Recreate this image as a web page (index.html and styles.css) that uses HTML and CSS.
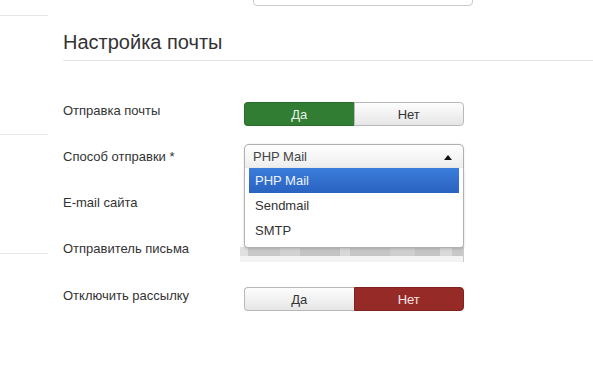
FILE: index.html
```html
<!DOCTYPE html>
<html lang="ru">
<head>
<meta charset="utf-8">
<link rel="stylesheet" href="styles.css">
</head>
<body>
<div class="page">
  <aside class="sidebar">
    <div class="side-item first"></div>
    <div class="side-item"></div>
    <div class="side-item"></div>
  </aside>
  <main class="main">
    <div class="top-input"></div>
    <h2 class="section-title">Настройка почты</h2>
    <div class="form">
      <div class="row">
        <label class="label">Отправка почты</label>
        <div class="toggle">
          <span class="btn yes active">Да</span>
          <span class="btn no">Нет</span>
        </div>
      </div>
      <div class="row">
        <label class="label">Способ отправки *</label>
        <div class="select-wrap">
          <div class="select">
            <span>PHP Mail</span>
            <span class="caret"></span>
          </div>
          <ul class="options">
            <li class="option selected">PHP Mail</li>
            <li class="option">Sendmail</li>
            <li class="option">SMTP</li>
          </ul>
        </div>
      </div>
      <div class="row">
        <label class="label">E-mail сайта</label>
      </div>
      <div class="row">
        <label class="label">Отправитель письма</label>
        <div class="blurred">
          <div class="blur-top"></div>
          <div class="blur-bottom"></div>
        </div>
      </div>
      <div class="row last">
        <label class="label">Отключить рассылку</label>
        <div class="toggle">
          <span class="btn yes">Да</span>
          <span class="btn no active-no">Нет</span>
        </div>
      </div>
    </div>
  </main>
</div>
</body>
</html>
```
FILE: styles.css
```css
* { box-sizing: border-box; }
html, body { margin: 0; padding: 0; background: #fff; }
body {
  font-family: "Helvetica Neue", "Liberation Sans", Arial, sans-serif;
  color: #333;
  width: 593px;
  height: 366px;
  overflow: hidden;
}
.page { display: flex; }
.sidebar { width: 48px; flex: none; }
.side-item {
  height: 119px;
  border-bottom: 1px solid #e6e6e6;
}
.side-item.first { height: 16px; }
.main {
  flex: 1;
  padding-left: 15px;
}
.top-input {
  width: 220px;
  height: 30px;
  margin-top: -24px;
  margin-left: 190px;
  border: 1px solid #ccc;
  border-radius: 4px;
}
.section-title {
  margin: 0;
  margin-top: 23px;
  font-weight: normal;
  font-size: 20px;
  line-height: 26px;
  color: #333;
  padding-bottom: 5px;
  border-bottom: 1px solid #e3e3e3;
}
.form { margin-top: 41px; }
.row {
  display: flex;
  align-items: flex-start;
  height: 46px;
}
.row.last { padding-top: 1px; }
.label {
  width: 181px;
  flex: none;
  font-size: 13px;
  line-height: 18px;
  color: #333;
}
.toggle {
  display: flex;
  width: 220px;
  height: 24px;
}
.btn {
  flex: 1;
  display: flex;
  align-items: center;
  justify-content: center;
  font-size: 13px;
  color: #333;
  background: linear-gradient(#fdfdfd, #e6e6e6);
  border: 1px solid #b8b8b8;
}
.btn.yes { border-radius: 4px 0 0 4px; border-right: none; }
.btn.no { border-radius: 0 4px 4px 0; }
.btn.active {
  background: #317d33;
  border-color: #2a6c2c;
  color: #e8f2e8;
}
.btn.active-no {
  background: #952a26;
  border-color: #80221e;
  color: #f4e6e5;
}
.select-wrap {
  position: relative;
  width: 220px;
  margin-top: -4px;
}
.select {
  height: 24px;
  border: 1px solid #b0b0b0;
  border-bottom: none;
  border-radius: 5px 5px 0 0;
  background: linear-gradient(#ffffff, #ededed);
  display: flex;
  align-items: center;
  justify-content: space-between;
  padding: 0 11px 0 8px;
  font-size: 13px;
  color: #444;
  box-shadow: 0 0 2px rgba(0,0,0,0.12);
}
.caret {
  width: 0; height: 0;
  border-left: 4px solid transparent;
  border-right: 4px solid transparent;
  border-bottom: 5px solid #111;
  margin-top: 2px;
}
.options {
  position: absolute;
  z-index: 5;
  top: 24px;
  left: 0;
  width: 220px;
  margin: 0;
  padding: 0 4px 4px;
  list-style: none;
  background: #fff;
  border: 1px solid #b0b0b0;
  border-top: none;
  border-radius: 0 0 4px 4px;
  box-shadow: 0 1px 3px rgba(0,0,0,0.15);
}
.option {
  height: 25px;
  line-height: 25px;
  font-size: 13px;
  padding-left: 6px;
  color: #333;
}
.option.selected {
  background: linear-gradient(#3b7ddb, #2a62c0);
  color: #eef3fb;
}
.blurred {
  width: 224px;
  margin-left: -4px;
  margin-top: 7px;
  border-right: 1px solid #ccc;
}
.blur-top {
  height: 9px;
  background: linear-gradient(90deg,
    #e0e0e0 0 8px, #c9c9c9 8px 40px, #d2d2d2 40px 60px, #c4c4c4 60px 100px,
    #d8d8d8 100px 110px, #c6c6c6 110px 150px, #cfcfcf 150px 175px,
    #c4c4c4 175px 200px, #d9d9d9 200px 212px, #c8c8c8 212px 224px);
}
.blur-bottom {
  height: 6px;
  background: #f3f3f3;
}
```
